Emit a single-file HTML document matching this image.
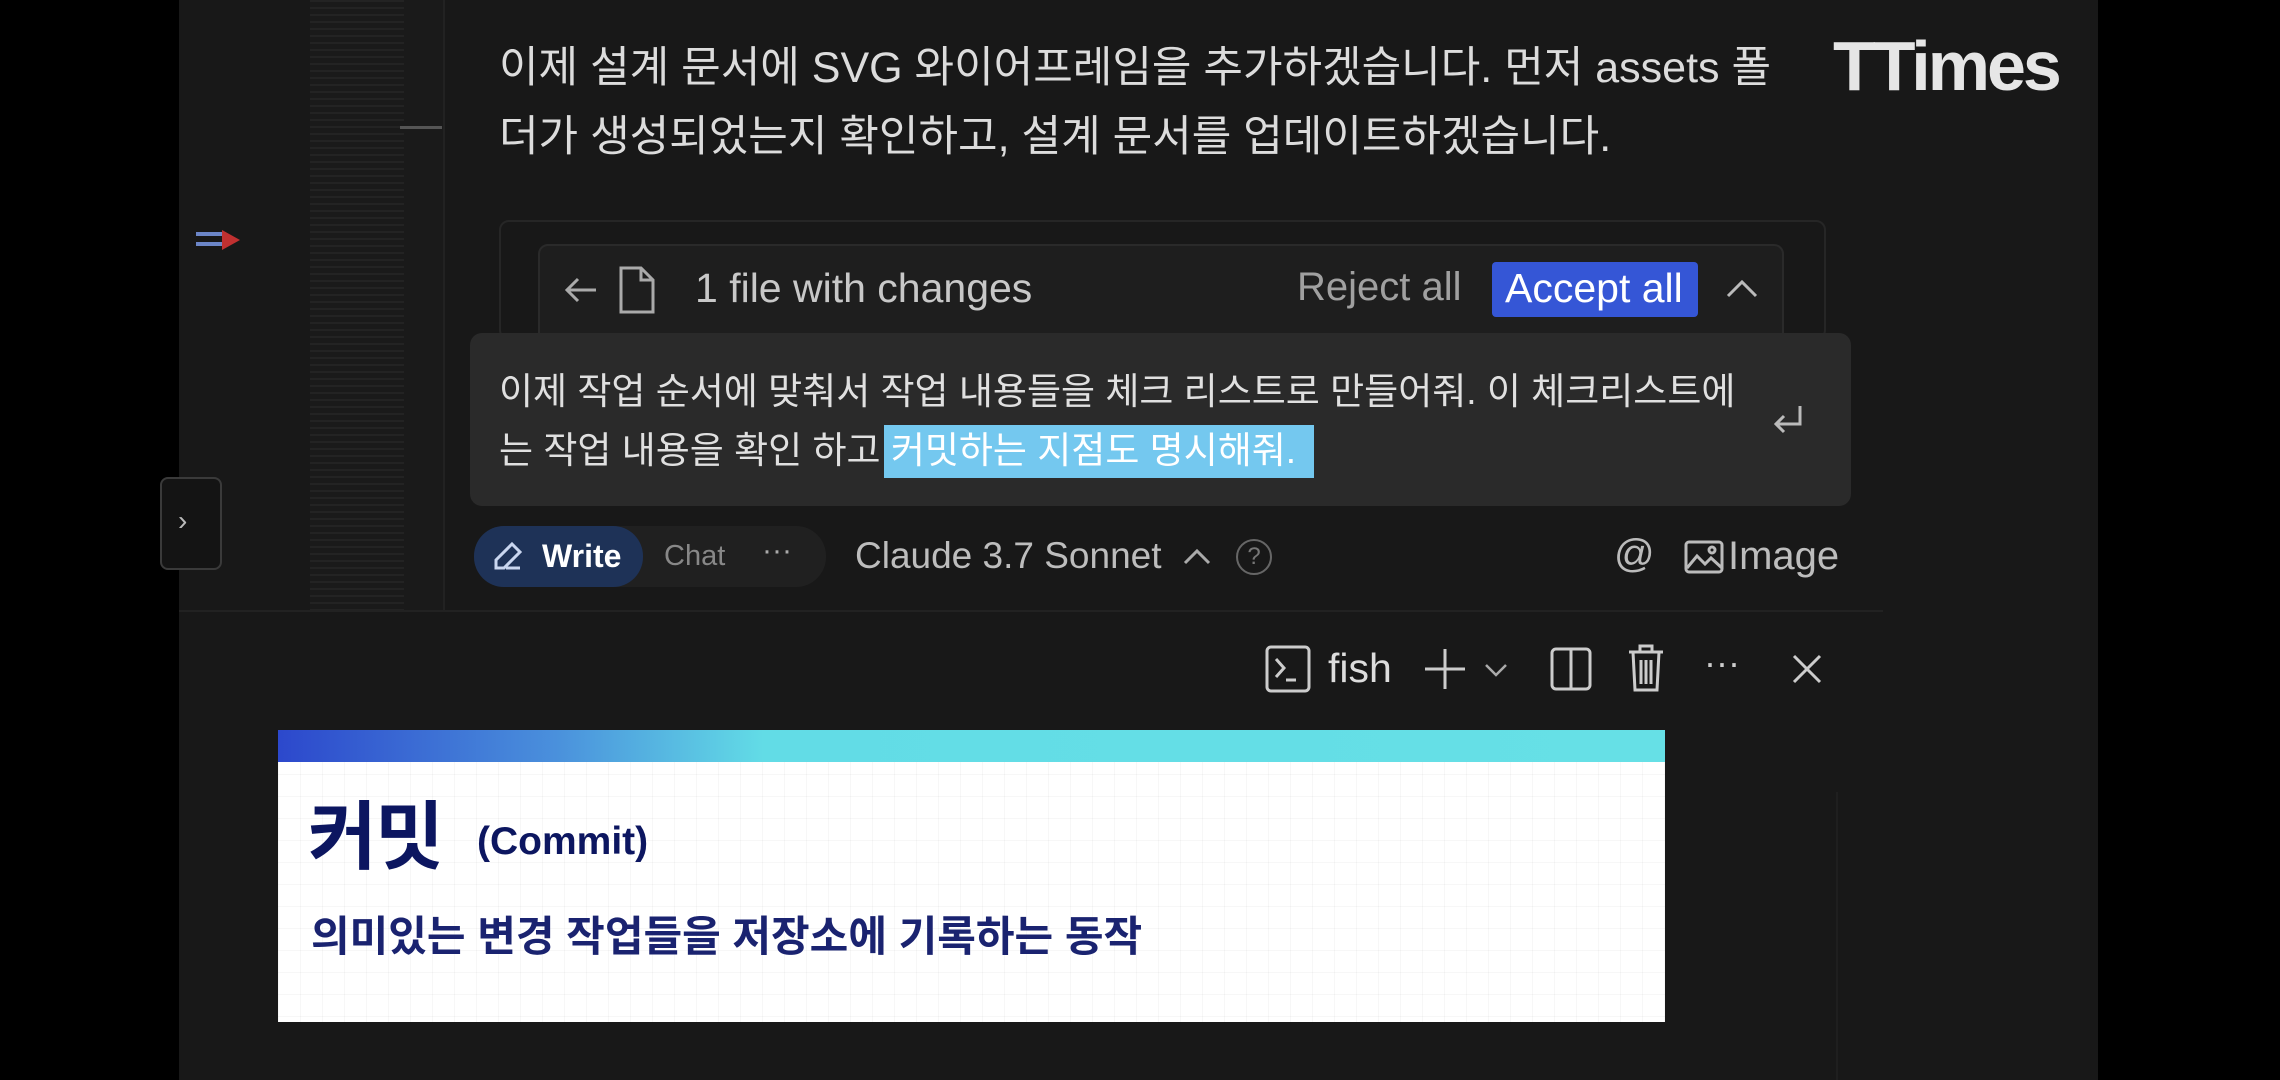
<!DOCTYPE html>
<html><head><meta charset="utf-8"><style>
*{margin:0;padding:0;box-sizing:border-box}
body{width:2280px;height:1080px;background:#000;position:relative;overflow:hidden;font-family:"Liberation Sans","Noto Sans CJK KR",sans-serif;color:#d4d4d4}
.a{position:absolute}
.ed{left:179px;top:0;width:1919px;height:1080px;background:#181818}
.t{white-space:nowrap}
</style></head><body>
<div class="a ed"></div>
<!-- minimap -->
<div class="a" style="left:310px;top:0;width:94px;height:610px;background:repeating-linear-gradient(180deg,#2a2a2a 0 2px,#1c1c1c 2px 7px);opacity:.6"></div>
<div class="a" style="left:404px;top:0;width:40px;height:610px;background:#1a1a1a"></div>
<div class="a" style="left:443px;top:0;width:2px;height:610px;background:#222"></div>
<div class="a" style="left:400px;top:126px;width:42px;height:3px;background:#555"></div>
<!-- marker -->
<div class="a" style="left:196px;top:232px;width:28px;height:4px;background:#6c86c8"></div>
<div class="a" style="left:196px;top:242px;width:28px;height:4px;background:#6c86c8"></div>
<div class="a" style="left:222px;top:230px;width:0;height:0;border-left:18px solid #c03030;border-top:10px solid transparent;border-bottom:10px solid transparent"></div>
<!-- left panel tab -->
<div class="a" style="left:160px;top:477px;width:62px;height:93px;border:2px solid #3a3a3a;border-radius:8px;background:#141414"></div>
<div class="a t" style="left:178px;top:505px;font-size:28px;color:#bbb">›</div>
<!-- top text -->
<div class="a t" style="left:499px;top:42px;font-size:43px;color:#dcdcdc;line-height:52px">이제 설계 문서에 SVG 와이어프레임을 추가하겠습니다. 먼저 assets 폴</div>
<div class="a t" style="left:499px;top:111px;font-size:43px;color:#dcdcdc;line-height:52px">더가 생성되었는지 확인하고, 설계 문서를 업데이트하겠습니다.</div>
<!-- logo -->
<div class="a t" style="left:1833px;top:26px;font-size:70px;font-weight:bold;color:#e6e6e6;letter-spacing:-3px">TTimes</div>
<!-- outer box -->
<div class="a" style="left:499px;top:220px;width:1327px;height:120px;border:2px solid #262626;border-radius:10px"></div>
<!-- changes bar -->
<div class="a" style="left:538px;top:244px;width:1246px;height:100px;background:#1e1e1e;border:2px solid #2a2a2a;border-radius:10px"></div>
<svg class="a" style="left:562px;top:270px" width="40" height="40" viewBox="0 0 40 40" fill="none" stroke="#aaa" stroke-width="3"><path d="M34 20H6M16 9L5 20l11 11"/></svg>
<svg class="a" style="left:617px;top:264px" width="40" height="52" viewBox="0 0 40 52" fill="none" stroke="#aaa" stroke-width="3"><path d="M4 4h20l12 12v32H4z M24 4v12h12"/></svg>
<div class="a t" style="left:695px;top:265px;font-size:41px;color:#c8c8c8">1 file with changes</div>
<div class="a t" style="left:1297px;top:265px;font-size:40px;color:#a0a0a0">Reject all</div>
<div class="a" style="left:1492px;top:262px;width:206px;height:55px;background:#3556d6;border-radius:4px"></div>
<div class="a t" style="left:1505px;top:265px;font-size:41px;color:#fff">Accept all</div>
<svg class="a" style="left:1724px;top:276px" width="36" height="24" viewBox="0 0 36 24" fill="none" stroke="#bbb" stroke-width="3"><path d="M4 20L18 6l14 14"/></svg>
<!-- input -->
<div class="a" style="left:470px;top:333px;width:1381px;height:173px;background:#2a2a2a;border-radius:12px"></div>
<div class="a" style="left:884px;top:425px;width:430px;height:53px;background:#74c8ef"></div>
<div class="a t" style="left:499px;top:368px;font-size:37px;color:#e0e0e0;line-height:48px">이제 작업 순서에 맞춰서 작업 내용들을 체크 리스트로 만들어줘. 이 체크리스트에</div>
<div class="a t" style="left:499px;top:427px;font-size:37px;color:#e0e0e0;line-height:48px">는 작업 내용을 확인 하고 <span style="color:#fff">커밋하는 지점도 명시해줘.</span></div>
<svg class="a" style="left:1770px;top:402px" width="36" height="36" viewBox="0 0 36 36" fill="none" stroke="#bbb" stroke-width="3"><path d="M30 4v18H6M14 14l-8 8 8 8"/></svg>
<!-- bottom row -->
<div class="a" style="left:474px;top:526px;width:352px;height:61px;background:#202020;border-radius:30px"></div>
<div class="a" style="left:474px;top:526px;width:169px;height:61px;background:#1e3257;border-radius:30px"></div>
<svg class="a" style="left:490px;top:540px" width="34" height="34" viewBox="0 0 34 34" fill="none" stroke="#c9d6f0" stroke-width="3"><path d="M22 4l8 8-16 16H6v-8z M16 28h14"/></svg>
<div class="a t" style="left:542px;top:538px;font-size:32px;font-weight:bold;color:#fff">Write</div>
<div class="a t" style="left:664px;top:540px;font-size:29px;color:#888">Chat</div>
<div class="a t" style="left:762px;top:534px;font-size:30px;color:#aaa">···</div>
<div class="a t" style="left:855px;top:535px;font-size:37px;color:#bdbdbd">Claude 3.7 Sonnet</div>
<svg class="a" style="left:1182px;top:546px" width="30" height="20" viewBox="0 0 30 20" fill="none" stroke="#aaa" stroke-width="3"><path d="M3 17L15 5l12 12"/></svg>
<div class="a" style="left:1236px;top:539px;width:36px;height:36px;border:2.5px solid #666;border-radius:50%;font-size:24px;color:#777;text-align:center;line-height:31px">?</div>
<div class="a t" style="left:1614px;top:532px;font-size:40px;color:#bbb">@</div>
<svg class="a" style="left:1684px;top:540px" width="40" height="34" viewBox="0 0 40 34" fill="none" stroke="#bbb" stroke-width="3"><rect x="2" y="2" width="36" height="30" rx="3"/><path d="M3 28l10-12 8 8 6-6 11 10"/><circle cx="28" cy="10" r="3"/></svg>
<div class="a t" style="left:1728px;top:534px;font-size:40px;color:#bdbdbd">Image</div>
<div class="a" style="left:179px;top:610px;width:1704px;height:2px;background:#222"></div>
<!-- terminal toolbar -->
<svg class="a" style="left:1264px;top:644px" width="48" height="50" viewBox="0 0 48 50" fill="none" stroke="#ccc" stroke-width="3"><rect x="3" y="3" width="42" height="44" rx="4"/><path d="M12 15l8 9-8 9M22 36h10"/></svg>
<div class="a t" style="left:1328px;top:645px;font-size:41px;color:#ddd">fish</div>
<svg class="a" style="left:1422px;top:646px" width="46" height="46" viewBox="0 0 46 46" fill="none" stroke="#ccc" stroke-width="3"><path d="M23 3v40M3 23h40"/></svg>
<svg class="a" style="left:1483px;top:662px" width="26" height="16" viewBox="0 0 26 16" fill="none" stroke="#aaa" stroke-width="2.5"><path d="M3 3l10 10 10-10"/></svg>
<svg class="a" style="left:1549px;top:646px" width="44" height="46" viewBox="0 0 44 46" fill="none" stroke="#ccc" stroke-width="3"><rect x="3" y="3" width="38" height="40" rx="4"/><path d="M22 3v40"/></svg>
<svg class="a" style="left:1626px;top:642px" width="40" height="52" viewBox="0 0 40 52" fill="none" stroke="#ccc" stroke-width="3"><path d="M3 10h34M14 10V4h12v6M7 10l2 38h22l2-38M15 18v24M20 18v24M25 18v24"/></svg>
<div class="a t" style="left:1704px;top:642px;font-size:36px;color:#ccc">···</div>
<svg class="a" style="left:1790px;top:652px" width="34" height="34" viewBox="0 0 34 34" fill="none" stroke="#ccc" stroke-width="3"><path d="M4 4l26 26M30 4L4 30"/></svg>
<div class="a" style="left:1836px;top:792px;width:2px;height:288px;background:#1f1f1f"></div>
<!-- card -->
<div class="a" style="left:278px;top:730px;width:1387px;height:292px;background:#fff;background-image:linear-gradient(90deg,rgba(0,0,0,.03) 1px,transparent 1px),linear-gradient(rgba(0,0,0,.03) 1px,transparent 1px);background-size:22px 22px"></div>
<div class="a" style="left:278px;top:730px;width:1387px;height:32px;background:linear-gradient(90deg,#2c48cc 0%,#4a90dc 20%,#62dce6 35%,#66e0e6 100%)"></div>
<div class="a t" style="left:308px;top:776px;font-size:75px;font-weight:bold;color:#0c1660;letter-spacing:-2px">커밋</div>
<div class="a t" style="left:477px;top:820px;font-size:39px;font-weight:bold;color:#0c1660">(Commit)</div>
<div class="a t" style="left:311px;top:903px;font-size:42px;font-weight:bold;color:#1a2370">의미있는 변경 작업들을 저장소에 기록하는 동작</div>
</body></html>
